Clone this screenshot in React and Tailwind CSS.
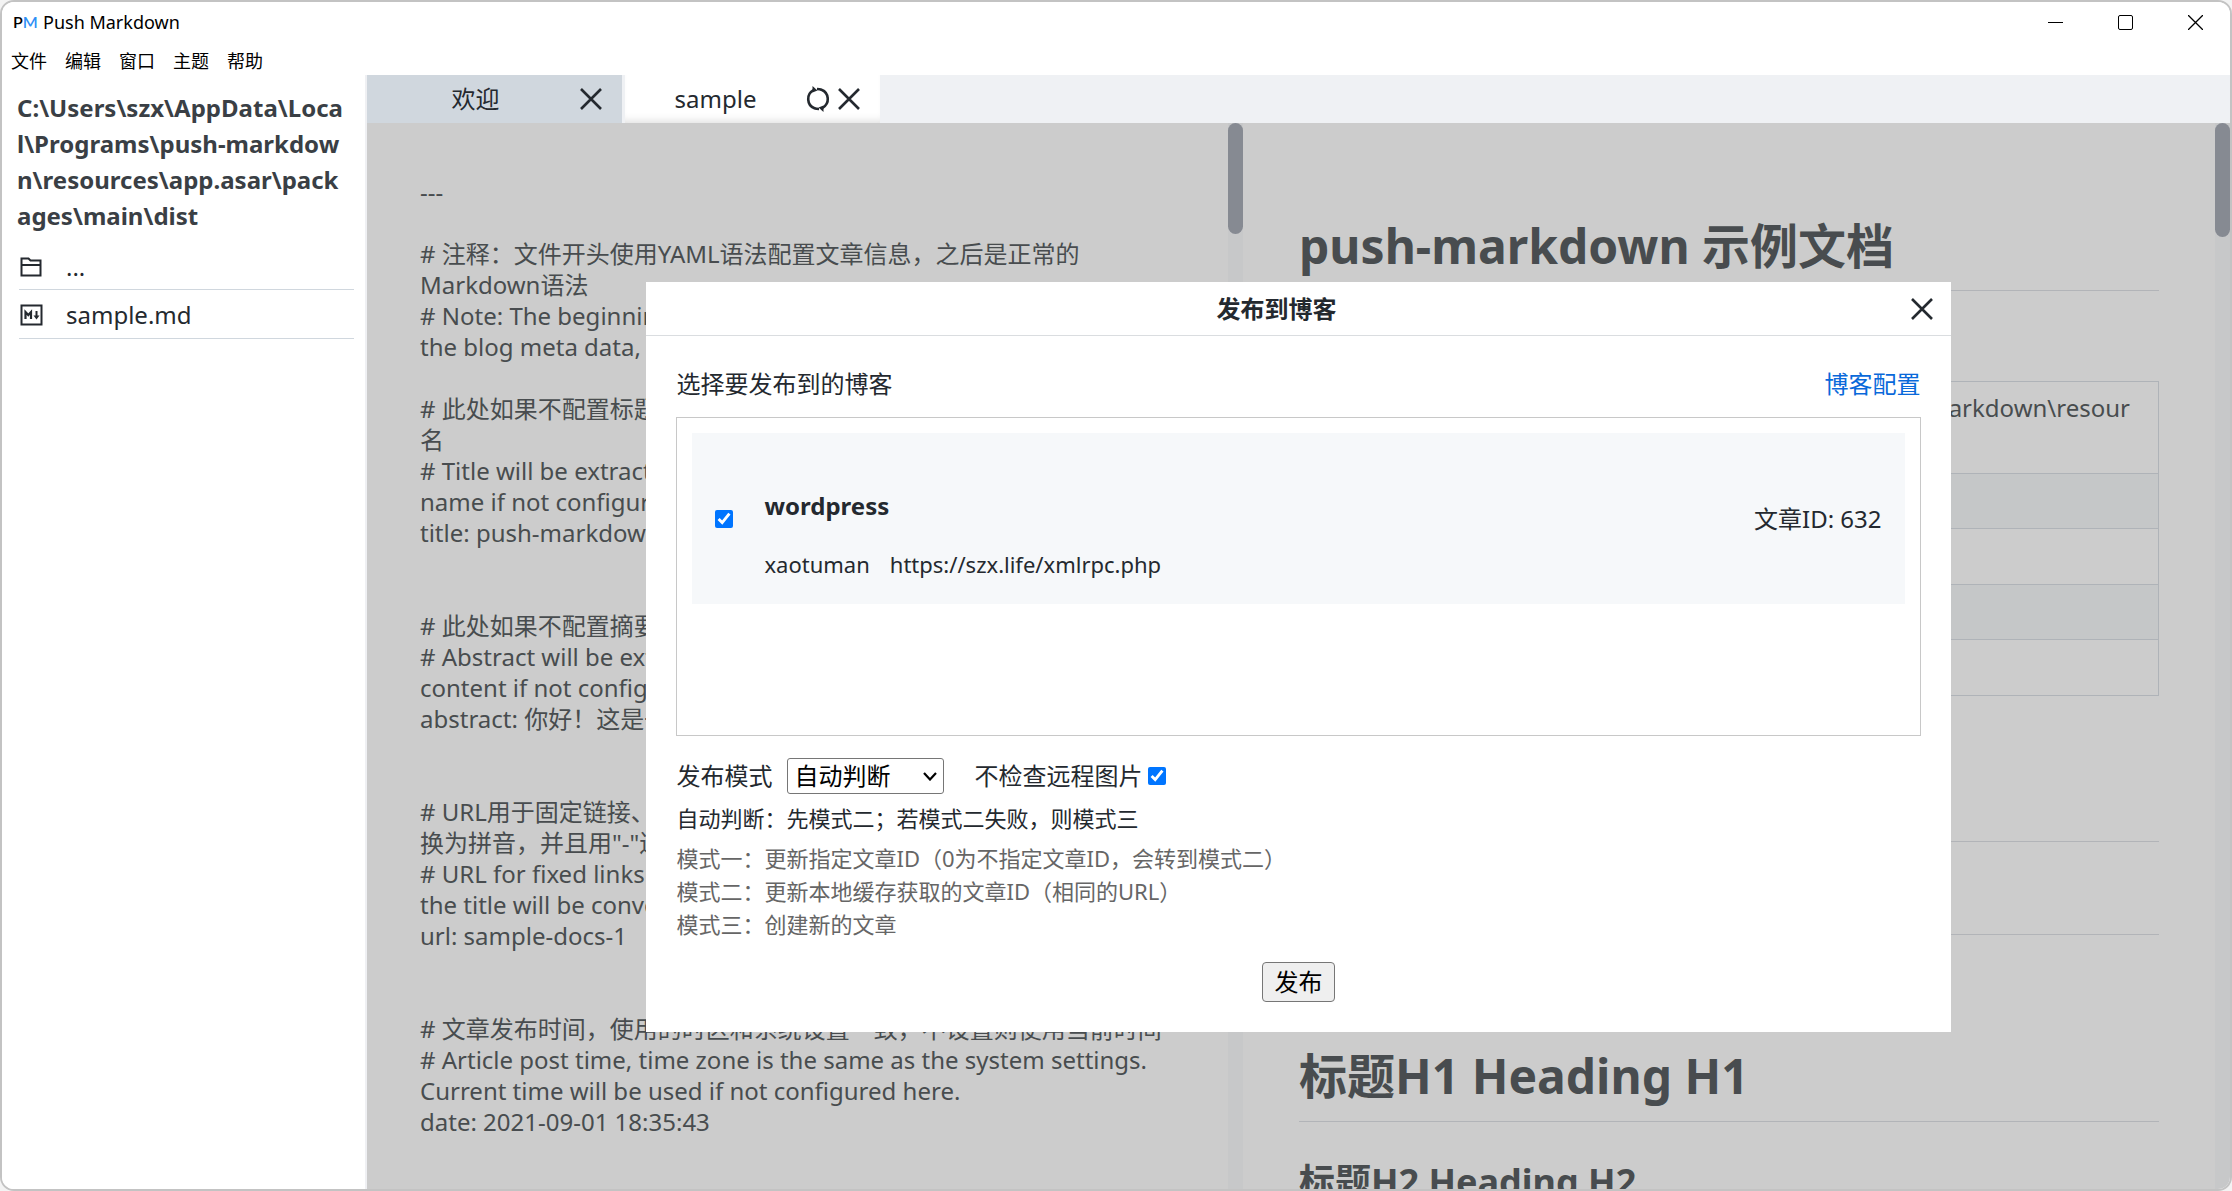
const EDITOR_TEXT = `---

# 注释：文件开头使用YAML语法配置文章信息，之后是正常的
Markdown语法
# Note: The beginning of the file uses YAML syntax to config
the blog meta data, followed by the normal Markdown.

# 此处如果不配置标题，则提取正文中的首个标题或者文件
名
# Title will be extracted from heading of markdown or file
name if not configured here.
title: push-markdown 示例文档


# 此处如果不配置摘要，则从正文提取开头若干个文字
# Abstract will be extracted from the beginning of markdown
content if not configured here.
abstract: 你好！这是一篇示例文档


# URL用于固定链接、编辑文章功能，不配置则由标题自动转
换为拼音，并且用"-"连接
# URL for fixed links and edit post function. If not configured,
the title will be converted to pinyin.
url: sample-docs-1


# 文章发布时间，使用的时区和系统设置一致，不设置则使用当前时间
# Article post time, time zone is the same as the system settings.
Current time will be used if not configured here.
date: 2021-09-01 18:35:43`;

const MENUS = ['文件', '编辑', '窗口', '主题', '帮助'];

const MODES = [
  '模式一：更新指定文章ID（0为不指定文章ID，会转到模式二）',
  '模式二：更新本地缓存获取的文章ID（相同的URL）',
  '模式三：创建新的文章',
];

function Cross({ className }) {
  return (
    <svg viewBox="0 0 22 22" className={className} fill="none" stroke="currentColor" strokeWidth="2.6">
      <path d="M1 1L21 21M21 1L1 21" />
    </svg>
  );
}

function SyncIcon() {
  return (
    <svg viewBox="0 0 24 26" className="h-[26px] w-6" fill="none" stroke="currentColor" strokeWidth="2.6">
      <path d="M7.500 4.200A10 10 0 0 0 8.500 22.300Q10 23 13 23" />
      <path d="M16.500 21.800A10 10 0 0 0 15.500 3.700Q14 3 11 3" />
      <path d="M6.500 0L11.500 4.500L6.500 6.500Z" fill="currentColor" stroke="none" />
      <path d="M17.500 26L12.500 21.500L17.500 19.500Z" fill="currentColor" stroke="none" />
    </svg>
  );
}

function TitleBar() {
  return (
    <header className="shrink-0 bg-white text-black">
      <div className="flex h-10 items-center justify-between">
        <div className="flex items-center gap-1.5 pl-[11px] text-lg leading-6">
          <span aria-hidden="true" className="w-6 whitespace-nowrap font-['Lato'] text-base font-semibold leading-none">
            P<span className="text-[#2f8ff5]">M</span>
          </span>
          <h1>Push Markdown</h1>
        </div>
        <div className="flex h-full">
          <button aria-label="Minimize" className="grid w-[70px] place-items-center">
            <span className="h-px w-[15px] bg-black" />
          </button>
          <button aria-label="Maximize" className="grid w-[70px] place-items-center">
            <span className="size-[15px] rounded-xs border border-black" />
          </button>
          <button aria-label="Close" className="grid w-[70px] place-items-center">
            <svg viewBox="0 0 15 15" className="size-[15px]" stroke="black" strokeWidth="1.3">
              <path d="M0 0L15 15M15 0L0 15" />
            </svg>
          </button>
        </div>
      </div>
      <nav className="flex h-[33px] gap-[18px] pl-[9px] text-lg">
        {MENUS.map((m) => (
          <button key={m} className="h-[38px]">{m}</button>
        ))}
      </nav>
    </header>
  );
}

function Sidebar() {
  return (
    <aside className="w-[365px] shrink-0 border-r-2 border-[#eff0f3] bg-white pl-[15px] pr-[11px] pt-[15px] text-[#24292f]">
      <h2 className="whitespace-nowrap text-2xl font-bold leading-9 text-[#3a3f45]">
        C:\Users\szx\AppData\Loca<br />l\Programs\push-markdow<br />n\resources\app.asar\pack<br />ages\main\dist
      </h2>
      <ul className="ml-0.5 text-2xl">
        <li className="flex h-14 items-center gap-[22px] border-b border-[#d0d7de] pt-2.5">
          <svg viewBox="0 0 24 20" className="ml-px h-5 w-6" fill="none" stroke="currentColor" strokeWidth="2">
            <path d="M1.500 18.500V1.500H8.500L10.500 3.500H20.500V18.500ZM1.500 8H20.500" />
          </svg>
          <a href="#parent">...</a>
        </li>
        <li className="flex h-[49px] items-center gap-[22px] border-b border-[#d0d7de] pt-0.5">
          <svg viewBox="0 0 24 22" className="ml-px h-[22px] w-6" fill="none" stroke="currentColor" strokeWidth="2">
            <rect x="1.500" y="1.500" width="20" height="19" />
            <path d="M5.500 15V8L8.300 11L11 8V15" strokeWidth="2.200" />
            <path d="M16.500 7V13" />
            <path d="M13.500 11.500H19.500L16.500 15.500Z" fill="currentColor" stroke="none" />
          </svg>
          <a href="#sample">sample.md</a>
        </li>
      </ul>
    </aside>
  );
}

function Tabs() {
  return (
    <div role="tablist" className="flex h-12 shrink-0 gap-[3px] bg-[#eff1f4] text-2xl text-[#24292f]">
      <div className="flex w-[255px] items-center bg-[#d0d7de] pl-1 pr-5">
        <button role="tab" aria-selected="false" className="flex-1 text-center">欢迎</button>
        <button aria-label="Close tab"><Cross className="size-[22px]" /></button>
      </div>
      <div className="flex w-[255px] items-center gap-2 bg-white pl-2 pr-5 shadow-[inset_0_-8px_10px_-7px_#00000028]">
        <button role="tab" aria-selected="true" className="flex-1 text-center">sample</button>
        <button aria-label="Refresh"><SyncIcon /></button>
        <button aria-label="Close tab"><Cross className="size-[22px]" /></button>
      </div>
    </div>
  );
}

function ScrollBar({ thumb }) {
  return (
    <div className="w-[15px] shrink-0 bg-[#f9fafc]">
      <div className={'rounded-full bg-[#a8adb7] ' + thumb} />
    </div>
  );
}

function Preview() {
  const cell = 'border border-[#dbe0e6] align-top';
  return (
    <article className="min-w-0 flex-1 overflow-hidden pl-14 pr-14 pt-[94px] text-[#5b5f63]">
      <h1 className="whitespace-nowrap border-b border-[#dfe2e6] pb-[15px] text-5xl font-bold leading-[58px]">push-markdown 示例文档</h1>
      <table className="mt-[90px] w-full table-fixed border-collapse text-2xl leading-9">
        <tbody>
          <tr className="h-[92px]">
            <td className={cell + ' w-20 pl-4 pt-2'}>路径</td>
            <td className={cell + ' whitespace-nowrap pr-7 pt-2'}>
              <div className="text-right">C:\Users\szx\AppData\Local\Programs\push-markdown\resour</div>
              <div className="pl-7">ces\app.asar\sample.md</div>
            </td>
          </tr>
          <tr className="h-[55px] bg-[#f7f9fb]"><td className={cell} /><td className={cell} /></tr>
          <tr className="h-14"><td className={cell} /><td className={cell} /></tr>
          <tr className="h-[55px] bg-[#f7f9fb]"><td className={cell} /><td className={cell} /></tr>
          <tr className="h-14"><td className={cell} /><td className={cell} /></tr>
        </tbody>
      </table>
      <hr className="mt-[145px] border-[#dfe2e6]" />
      <hr className="mt-[92px] border-[#dfe2e6]" />
      <h1 className="mt-[111px] border-b border-[#dfe2e6] pb-[15px] text-5xl font-bold leading-[60px]">标题H1 Heading H1</h1>
      <h2 className="mt-[35px] text-4xl font-bold leading-[50px]">标题H2 Heading H2</h2>
    </article>
  );
}

function PublishDialog() {
  return (
    <section role="dialog" aria-labelledby="dialog-title" className="w-[70%] bg-white text-2xl leading-8 text-[#24292f]">
      <header className="flex h-[54px] items-center border-b border-[#dadde0] pr-[18px]">
        <h2 id="dialog-title" className="flex-1 text-center font-bold">发布到博客</h2>
        <button aria-label="Close dialog" className="pl-1"><Cross className="size-[22px]" /></button>
      </header>
      <div className="px-[30px] pb-[30px] pt-8">
        <div className="flex justify-between">
          <p>选择要发布到的博客</p>
          <a href="#settings" className="text-[#0969da]">博客配置</a>
        </div>
        <div className="mt-[17px] h-[319px] border border-[#c8c8c8] p-[15px]">
          <label className="flex h-[171px] items-center bg-[#f6f8fa] px-[23px]">
            <input type="checkbox" defaultChecked className="size-[18px] accent-[#0075ff]" />
            <span className="ml-[31px] flex flex-1 flex-col gap-[26px] pt-8">
              <span className="font-bold">wordpress</span>
              <span className="flex gap-5 text-[22px]"><span>xaotuman</span><span>https://szx.life/xmlrpc.php</span></span>
            </span>
            <span>文章ID: 632</span>
          </label>
        </div>
        <div className="mt-[22px] flex items-center">
          <label htmlFor="mode">发布模式</label>
          <div className="relative ml-[15px]">
            <select id="mode" className="h-9 w-[157px] appearance-none rounded-[3px] border border-[#767676] bg-white pl-1.5 text-black">
              <option>自动判断</option>
            </select>
            <svg viewBox="0 0 14 9" className="pointer-events-none absolute right-[7px] top-3.5 h-[9px] w-3.5" fill="none" stroke="black" strokeWidth="2.200">
              <path d="M1 1L7 7.500L13 1" />
            </svg>
          </div>
          <label htmlFor="skip" className="ml-[30px]">不检查远程图片</label>
          <input id="skip" type="checkbox" defaultChecked className="ml-1.5 size-[18px] accent-[#0075ff]" />
        </div>
        <p className="mt-2 text-[22px]">自动判断：先模式二；若模式二失败，则模式三</p>
        <ul className="mt-2 text-[22px] leading-[33px] text-[#666]">
          {MODES.map((m) => <li key={m}>{m}</li>)}
        </ul>
        <div className="mt-[21px] flex justify-center">
          <button className="h-10 w-[73px] rounded-[4px] border border-[#767676] bg-[#efefef] text-black">发布</button>
        </div>
      </div>
    </section>
  );
}

export default function App() {
  return (
    <div className="h-screen bg-[#f3f3f3] font-['Noto_Sans','Noto_Sans_CJK_SC',sans-serif]">
      <div className="flex h-full flex-col overflow-hidden rounded-[14px] border-2 border-[#c3c3c3] bg-white">
        <TitleBar />
        <main className="flex min-h-0 flex-1">
          <Sidebar />
          <div className="flex min-w-0 flex-1 flex-col">
            <Tabs />
            <div className="relative flex min-h-0 flex-1">
              <div className="flex min-w-0 flex-[876]">
                <textarea aria-label="Markdown source" defaultValue={EDITOR_TEXT} className="min-w-0 flex-1 resize-none overflow-hidden whitespace-pre pl-[53px] pt-[53px] text-2xl leading-[31px] text-[#5b5f63] outline-none" />
                <ScrollBar thumb="h-[111px]" />
              </div>
              <div className="flex min-w-0 flex-[987]">
                <Preview />
                <ScrollBar thumb="h-[114px]" />
              </div>
              <div className="absolute inset-0 flex items-center justify-center bg-black/20 pt-0.5">
                <PublishDialog />
              </div>
            </div>
          </div>
        </main>
      </div>
    </div>
  );
}
